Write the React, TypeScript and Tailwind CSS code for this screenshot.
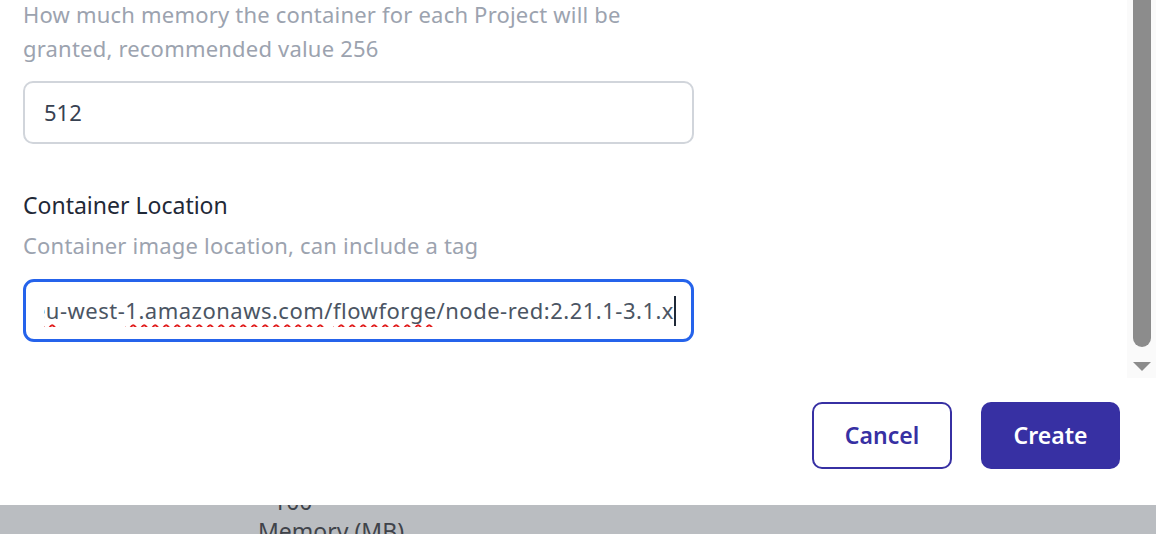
import React from 'react';

const font = "font-['Noto_Sans','Open_Sans',sans-serif]";
const squiggle = 'underline decoration-wavy decoration-[#e11d1d] decoration-[1.5px] underline-offset-[5px]';

const App: React.FC = () => {
  return (
    <div className={`w-[1156px] h-[534px] flex flex-col overflow-hidden ${font}`}>
      {/* Modal */}
      <div className="bg-white flex flex-col h-[505px] shrink-0">
        {/* Scrollable body */}
        <div className="flex h-[378px] shrink-0">
          <div className="flex-1 pl-[23px] overflow-hidden">
            <p className="-mt-[3px] w-[640px] text-[22px] tracking-[0.2px] leading-[34px] text-[#9ca3af]">
              How much memory the container for each Project will be granted, recommended value 256
            </p>
            <div className="mt-[16px] w-[671px] h-[63px] border-2 border-[#d1d5db] rounded-[10px] flex items-center px-[19px] text-[22px] text-[#374151]">
              512
            </div>

            <div className="mt-[45px] text-[23px] leading-[32px] text-[#1f2937]">Container Location</div>
            <div className="mt-[8px] text-[22px] tracking-[0.2px] leading-[32px] text-[#9ca3af]">
              Container image location, can include a tag
            </div>
            <div className="mt-[18px] w-[671px] h-[63px] border-[3px] border-[#2563eb] rounded-[11px] flex items-center pl-[18px] pr-[15px] text-[22px] tracking-[0.5px] text-[#4b5563]">
              <div className="flex-1 overflow-hidden flex justify-end whitespace-nowrap">
                <span>
                  123456789012.dkr.ecr.
                  <span className={squiggle}>eu</span>
                  -west-
                  <span className={squiggle}>1.amazonaws.com</span>
                  /
                  <span className={squiggle}>flowforge</span>
                  /node-red:2.21.1-3.1.x
                </span>
              </div>
              <div className="w-[2px] h-[30px] bg-[#1f2937]" />
            </div>
          </div>

          {/* Scrollbar */}
          <div className="w-[29px] bg-[#fafafa] flex flex-col pl-[6px] pr-[5px]">
            <div className="h-[347px] bg-[#8c8c8c] rounded-b-full" />
            <svg className="mt-[15px]" width="18" height="10" viewBox="0 0 18 10">
              <polygon points="0,0 18,0 9,9" fill="#8c8c8c" />
            </svg>
          </div>
        </div>

        {/* Footer */}
        <div className="flex-1 flex justify-end items-start pt-[24px] pr-[36px] gap-[29px]">
          <button className="w-[140px] h-[67px] rounded-[10px] border-2 border-[#3730a3] bg-white text-[#3730a3] text-[23px] font-semibold">
            Cancel
          </button>
          <button className="w-[139px] h-[67px] rounded-[10px] bg-[#3730a3] text-white text-[23px] font-semibold">
            Create
          </button>
        </div>
      </div>

      {/* Dimmed page behind */}
      <div className="flex-1 bg-[#babdc1] overflow-hidden text-[#3f434a] text-[23px] leading-[30px]">
        <div className="-mt-[19px] ml-[273px]">100</div>
        <div className="ml-[258px]">Memory (MB)</div>
      </div>
    </div>
  );
};

export default App;
